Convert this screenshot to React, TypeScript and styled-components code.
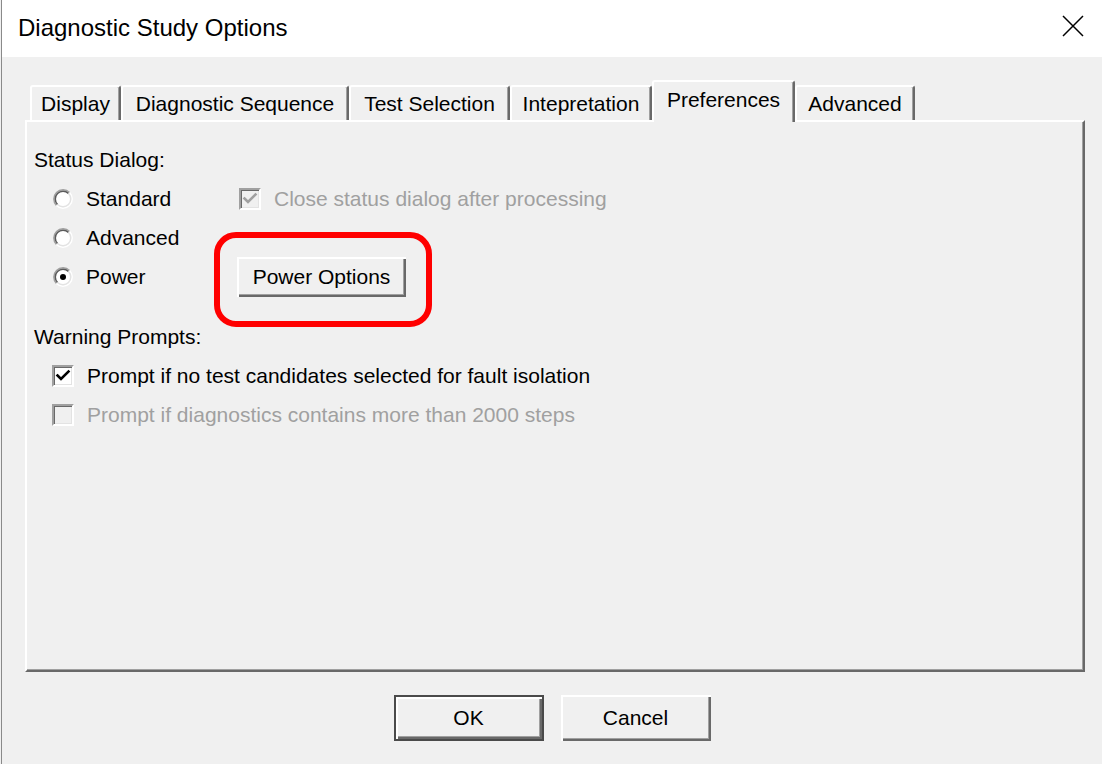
import React, { useState } from 'react'
import styled, { createGlobalStyle } from 'styled-components'

const TABS = [
  { name: 'Display', width: 91 },
  { name: 'Diagnostic Sequence', width: 228 },
  { name: 'Test Selection', width: 161 },
  { name: 'Intepretation', width: 142 },
  { name: 'Preferences', width: 143 },
  { name: 'Advanced', width: 120 },
]

type Mode = 'standard' | 'advanced' | 'power'

const RadioMark: React.FC<{ checked: boolean }> = ({ checked }) => (
  <svg width="20" height="20" viewBox="0 0 20 20">
    <circle cx="10" cy="10" r="8.5" fill="#fff" />
    {/* sunken ring: dark top-left, light bottom-right */}
    <path d="M3.46 16.54 A9.25 9.25 0 0 1 16.54 3.46" fill="none" stroke="#a0a0a0" strokeWidth="1.5" />
    <path d="M4.52 15.48 A7.75 7.75 0 0 1 15.48 4.52" fill="none" stroke="#5a5a5a" strokeWidth="1.5" />
    <path d="M16.54 3.46 A9.25 9.25 0 0 1 3.46 16.54" fill="none" stroke="#ffffff" strokeWidth="1.5" />
    <path d="M15.48 4.52 A7.75 7.75 0 0 1 4.52 15.48" fill="none" stroke="#e3e3e3" strokeWidth="1.5" />
    {checked && <circle cx="10" cy="10" r="3" fill="#000" />}
  </svg>
)

const CheckTick: React.FC<{ color: string }> = ({ color }) => (
  <svg width="16" height="16" viewBox="0 0 16 16">
    <path d="M2.5 7.5 L6 11 L13.5 3.5" fill="none" stroke={color} strokeWidth="2.6" strokeLinecap="square" />
  </svg>
)

const App: React.FC = () => {
  const [tab, setTab] = useState('Preferences')
  const [mode, setMode] = useState<Mode>('power')
  const [promptNoTests, setPromptNoTests] = useState(true)

  return (
    <>
      <GlobalStyle />
      <Window>
        <TitleBar>
          <Title>Diagnostic Study Options</Title>
          <CloseButton aria-label="Close">
            <svg width="22" height="22" viewBox="0 0 22 22">
              <path d="M1 1 L21 21 M21 1 L1 21" stroke="#000" strokeWidth="1.5" />
            </svg>
          </CloseButton>
        </TitleBar>

        <Body>
          <TabStrip>
            {TABS.map(t => (
              <Tab key={t.name} $width={t.width} $active={tab === t.name} onClick={() => setTab(t.name)}>
                {t.name}
              </Tab>
            ))}
          </TabStrip>

          <Panel>
            {tab === 'Preferences' && (
              <>
                <SectionLabel>Status Dialog:</SectionLabel>
                <StatusGrid>
                  <Option $indent={19} onClick={() => setMode('standard')}>
                    <RadioMark checked={mode === 'standard'} />
                    <OptionText>Standard</OptionText>
                  </Option>
                  <Option $indent={2}>
                    <CheckBox $disabled>
                      <CheckTick color="#a0a0a0" />
                    </CheckBox>
                    <OptionText $disabled>Close status dialog after processing</OptionText>
                  </Option>

                  <Option $indent={19} onClick={() => setMode('advanced')}>
                    <RadioMark checked={mode === 'advanced'} />
                    <OptionText>Advanced</OptionText>
                  </Option>
                  <div />

                  <Option $indent={19} onClick={() => setMode('power')}>
                    <RadioMark checked={mode === 'power'} />
                    <OptionText>Power</OptionText>
                  </Option>
                  <Option $indent={0}>
                    <Highlight>
                      <PushButton>Power Options</PushButton>
                    </Highlight>
                  </Option>
                </StatusGrid>

                <SectionLabel $gap={21}>Warning Prompts:</SectionLabel>
                <Option $indent={18} onClick={() => setPromptNoTests(!promptNoTests)}>
                  <CheckBox>{promptNoTests && <CheckTick color="#000" />}</CheckBox>
                  <OptionText>Prompt if no test candidates selected for fault isolation</OptionText>
                </Option>
                <Option $indent={18}>
                  <CheckBox $disabled />
                  <OptionText $disabled>Prompt if diagnostics contains more than 2000 steps</OptionText>
                </Option>
              </>
            )}
          </Panel>

          <ButtonRow>
            <DialogButton $default>OK</DialogButton>
            <DialogButton>Cancel</DialogButton>
          </ButtonRow>
        </Body>
      </Window>
    </>
  )
}

export default App

const GlobalStyle = createGlobalStyle`
  html, body {
    margin: 0;
    padding: 0;
    background: #f0f0f0;
  }
  body {
    font-family: "Liberation Sans", Arial, sans-serif;
    color: #000;
  }
  * { box-sizing: border-box; }
`

const Window = styled.div`
  width: 1101px;
  height: 764px;
  margin-left: 1px;
  border-left: 1px solid #8a8a8a;
  display: flex;
  flex-direction: column;
  overflow: hidden;
`

const TitleBar = styled.div`
  height: 57px;
  flex-shrink: 0;
  background: #fff;
  display: flex;
  align-items: center;
  justify-content: space-between;
  padding: 0 18px 2px 16px;
`

const Title = styled.div`
  font-size: 24px;
  color: #000;
`

const CloseButton = styled.button`
  border: none;
  background: transparent;
  padding: 0;
  width: 22px;
  height: 22px;
  margin-bottom: 4px;
  display: flex;
  cursor: pointer;
`

const Body = styled.div`
  flex: 1;
  background: #f0f0f0;
  padding: 23px 0 0 23px;
  display: flex;
  flex-direction: column;
`

const TabStrip = styled.div`
  display: flex;
  align-items: flex-end;
  height: 40px;
  padding-left: 5px;
`

const Tab = styled.div<{ $width: number; $active?: boolean }>`
  width: ${p => p.$width}px;
  height: ${p => (p.$active ? 42 : 35)}px;
  margin-bottom: ${p => (p.$active ? -2 : 0)}px;
  position: relative;
  z-index: ${p => (p.$active ? 1 : 0)};
  display: flex;
  align-items: center;
  justify-content: center;
  padding-bottom: ${p => (p.$active ? 4 : 0)}px;
  font-size: 21px;
  background: #f0f0f0;
  border-top: 2px solid #fff;
  border-left: 2px solid #fff;
  border-right: 2px solid #696969;
  border-radius: 3px 3px 0 0;
  box-shadow: inset -1px 0 #a0a0a0;
  cursor: default;
  white-space: nowrap;
`

const Panel = styled.div`
  width: 1060px;
  height: 552px;
  flex-shrink: 0;
  background: #f0f0f0;
  border-top: 2px solid #fff;
  border-left: 2px solid #fff;
  border-right: 2px solid #696969;
  border-bottom: 2px solid #696969;
  box-shadow: inset -1px -1px #a0a0a0;
  padding: 18px 0 0 7px;
`

const SectionLabel = styled.div<{ $gap?: number }>`
  height: 39px;
  margin-top: ${p => p.$gap || 0}px;
  display: flex;
  align-items: center;
  font-size: 21px;
`

const StatusGrid = styled.div`
  display: grid;
  grid-template-columns: 203px 1fr;
  grid-auto-rows: 39px;
  align-items: center;
`

const Option = styled.div<{ $indent: number }>`
  display: flex;
  align-items: center;
  gap: 13px;
  height: 39px;
  padding-left: ${p => p.$indent}px;
  cursor: default;
`

const OptionText = styled.span<{ $disabled?: boolean }>`
  font-size: 21px;
  color: ${p => (p.$disabled ? '#a0a0a0' : '#000')};
  white-space: nowrap;
`

const CheckBox = styled.div<{ $disabled?: boolean }>`
  width: 22px;
  height: 22px;
  flex-shrink: 0;
  display: flex;
  align-items: center;
  justify-content: center;
  background: ${p => (p.$disabled ? '#f0f0f0' : '#fff')};
  border-top: 2px solid #a0a0a0;
  border-left: 2px solid #a0a0a0;
  border-right: 2px solid #fff;
  border-bottom: 2px solid #fff;
  box-shadow: inset 1px 1px #696969, inset -1px -1px #e3e3e3;
`

const Highlight = styled.div`
  position: relative;
  display: inline-flex;

  &::after {
    content: "";
    position: absolute;
    top: -25px;
    left: -23px;
    right: -26px;
    bottom: -30px;
    border: 6px solid #ff0000;
    border-radius: 22px;
    pointer-events: none;
  }
`

const PushButton = styled.button`
  width: 169px;
  height: 40px;
  font-family: inherit;
  font-size: 21px;
  color: #000;
  background: #f0f0f0;
  border: none;
  padding: 0;
  box-shadow: inset 2px 2px #fff, inset -2px -2px #696969, inset -3px -3px #a0a0a0;
  cursor: default;
`

const ButtonRow = styled.div`
  display: flex;
  justify-content: center;
  gap: 17px;
  padding: 23px 23px 0 0;
`

const DialogButton = styled.button<{ $default?: boolean }>`
  width: 150px;
  height: 46px;
  font-family: inherit;
  font-size: 21px;
  color: #000;
  background: #f0f0f0;
  padding: 0;
  border: ${p => (p.$default ? '2px solid #4a4a4a' : 'none')};
  box-shadow: inset 2px 2px #fff, inset -2px -2px #696969, inset -3px -3px #a0a0a0;
  cursor: default;
`
